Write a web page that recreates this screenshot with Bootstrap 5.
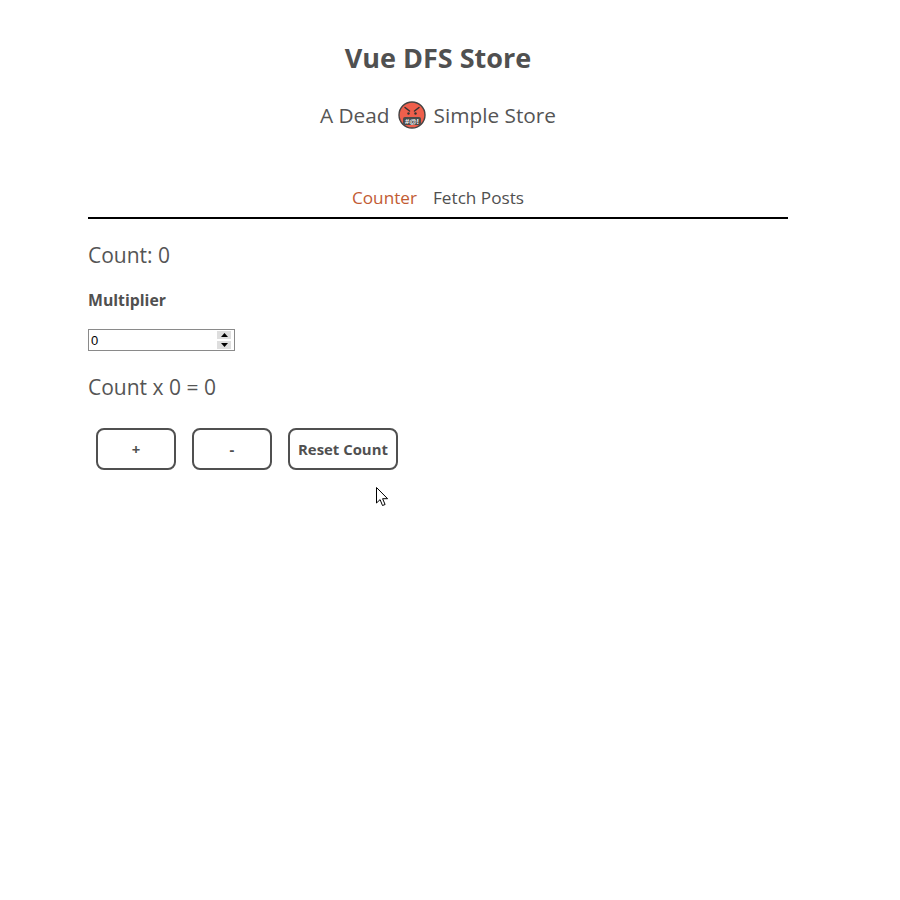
<!DOCTYPE html>
<html lang="en">
<head>
    <meta charset="UTF-8">
    <meta name="viewport" content="width=device-width, initial-scale=1.0">
    <title>Vue DFS Store</title>
    <link href="https://cdn.jsdelivr.net/npm/bootstrap@5.3.0/dist/css/bootstrap.min.css" rel="stylesheet">
    <style>
        body { font-family: "Open Sans", "Noto Sans", sans-serif; color: #505050; background: #fff; }
        .app-wrap { width: 700px; margin-left: 88px; padding-top: 40px; }
        .app-title { font-size: 27px; font-weight: 700; line-height: 36px; margin-bottom: 23px; color: #505050; }
        .app-sub { font-size: 20.8px; line-height: 32px; height: 32px; margin-bottom: 51px; color: #555; gap: 8px; }
        .tab-bar { border-bottom: 2px solid #000; height: 37px; gap: 16px; padding-top: 3px; }
        .tab-link { font-size: 17.2px; line-height: 26px; color: #505050; text-decoration: none; }
        .tab-link.is-active { color: #c25b33; }
        .count-line { font-size: 21px; line-height: 28px; color: #555; margin-top: 22px; }
        .mult-label { font-size: 15.8px; font-weight: 700; line-height: 22px; margin: 20px 0 18px; display: block; }
        .mult-box { width: 147px; height: 22px; }
        .mult-input { display: block; width: 100%; height: 100%; font-family: "Liberation Sans", sans-serif; font-size: 13px; color: #000; border: 1px solid #8a8a8a; padding: 1px 2px; border-radius: 0; }
        .mult-input::-webkit-inner-spin-button { display: none; }
        .spin-box { position: absolute; left: 129px; top: 2px; width: 14px; height: 18px; background: #fff; }
        .spin-part { height: 8px; background: #dedede; margin-bottom: 2px; }
        .act-row { margin-top: 27px; margin-left: 8px; gap: 16px; }
        .act-btn { height: 42px; min-width: 80px; padding: 0 8px; background: #fff; border: 2px solid #505050; border-radius: 8px; color: #505050; font-size: 14.9px; font-weight: 700; }
        .act-btn:hover { background: #fff; color: #505050; border-color: #505050; }
        .mouse-arrow { position: absolute; left: 376px; top: 487px; }
    </style>
</head>
<body>
    <div class="app-wrap">
        <h1 class="app-title text-center">Vue DFS Store</h1>
        <div class="app-sub d-flex justify-content-center align-items-center">
            <span>A Dead</span>
            <!-- swearing face -->
            <svg width="28" height="28" viewBox="0 0 28 28">
                <circle cx="14" cy="14" r="13" fill="#ef5f4c" stroke="#444" stroke-width="1.4"/>
                <path d="M7 6.5l4.5 3.5M21 6.5l-4.5 3.5" stroke="#333" stroke-width="1.5" stroke-linecap="round"/>
                <circle cx="10.5" cy="12.5" r="1.2" fill="#333"/>
                <circle cx="17.5" cy="12.5" r="1.2" fill="#333"/>
                <rect x="5" y="16" width="18" height="8" rx="2" fill="#4a4a4a"/>
                <text x="14" y="22.6" font-family="Liberation Sans, sans-serif" font-size="7.5" font-weight="700" fill="#fff" text-anchor="middle">#@!</text>
            </svg>
            <span>Simple Store</span>
        </div>

        <div class="tab-bar d-flex justify-content-center">
            <a href="#" class="tab-link is-active">Counter</a>
            <a href="#" class="tab-link">Fetch Posts</a>
        </div>

        <div class="count-line">Count: 0</div>
        <label class="mult-label" for="multiplier">Multiplier</label>
        <div class="mult-box position-relative">
            <input class="mult-input" id="multiplier" type="number" value="0">
            <div class="spin-box">
                <div class="spin-part d-flex justify-content-center align-items-center">
                    <svg width="7" height="4" viewBox="0 0 7 4"><path d="M3.5 0l3.5 4H0z" fill="#000"/></svg>
                </div>
                <div class="spin-part d-flex justify-content-center align-items-center">
                    <svg width="7" height="4" viewBox="0 0 7 4"><path d="M0 0h7L3.5 4z" fill="#000"/></svg>
                </div>
            </div>
        </div>
        <div class="count-line">Count x 0 = 0</div>

        <div class="act-row d-flex">
            <button type="button" class="btn act-btn">+</button>
            <button type="button" class="btn act-btn">-</button>
            <button type="button" class="btn act-btn">Reset Count</button>
        </div>
    </div>

    <svg class="mouse-arrow" width="13" height="20" viewBox="0 0 13 20">
        <path d="M.5.5v15.5l3.6-3.4 2.4 5.9 2.6-1-2.5-5.8h5z" fill="#fff" stroke="#000" stroke-width="1"/>
    </svg>

    <script src="https://cdn.jsdelivr.net/npm/bootstrap@5.3.0/dist/js/bootstrap.bundle.min.js"></script>
</body>
</html>
